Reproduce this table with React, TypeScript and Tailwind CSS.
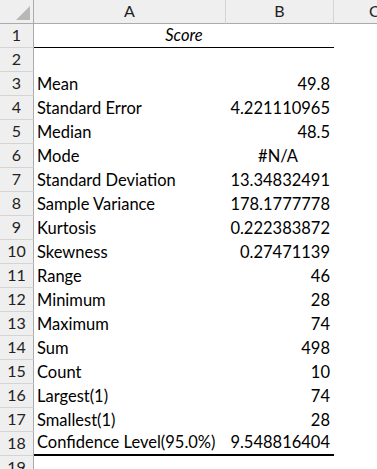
const rows: { label: string; value: string; center?: boolean }[] = [
  { label: 'Mean', value: '49.8' },
  { label: 'Standard Error', value: '4.221110965' },
  { label: 'Median', value: '48.5' },
  { label: 'Mode', value: '#N/A', center: true },
  { label: 'Standard Deviation', value: '13.34832491' },
  { label: 'Sample Variance', value: '178.1777778' },
  { label: 'Kurtosis', value: '0.222383872' },
  { label: 'Skewness', value: '0.27471139' },
  { label: 'Range', value: '46' },
  { label: 'Minimum', value: '28' },
  { label: 'Maximum', value: '74' },
  { label: 'Sum', value: '498' },
  { label: 'Count', value: '10' },
  { label: 'Largest(1)', value: '74' },
  { label: 'Smallest(1)', value: '28' },
  { label: 'Confidence Level(95.0%)', value: '9.548816404' },
];

const font = { fontFamily: 'Lato, "Liberation Sans", sans-serif' };

const RowNum = ({ n }: { n: number }) => (
  <div className="h-[24px] bg-[#efefef] border-r border-b border-r-[#ababab] border-b-[#d4d4d4] flex items-end justify-center pb-[1px] text-[16px] leading-[22px] text-[#222]">
    {n}
  </div>
);

const Sheet = () => {
  return (
    <div className="w-[377px] h-[469px] overflow-hidden bg-white" style={font}>
      <div className="grid grid-cols-[34px_192px_108px_1fr]">
        {/* column headers */}
        <div className="h-[24px] bg-[#efefef] border-r border-b border-[#ababab] flex items-end justify-end p-[3px]">
          <svg width="14" height="14" viewBox="0 0 14 14">
            <polygon points="14,0 14,14 0,14" fill="#b8b8b8" />
          </svg>
        </div>
        <div className="h-[24px] bg-[#efefef] border-r border-b border-r-[#d4d4d4] border-b-[#ababab] flex items-end justify-center pb-[1px] text-[16px] leading-[22px] text-[#222]">A</div>
        <div className="h-[24px] bg-[#efefef] border-r border-b border-r-[#d4d4d4] border-b-[#ababab] flex items-end justify-center pb-[1px] text-[16px] leading-[22px] text-[#222]">B</div>
        <div className="h-[24px] bg-[#efefef] border-b border-b-[#ababab] flex items-end pl-[35px] pb-[1px] text-[16px] leading-[22px] text-[#222]">C</div>

        {/* title */}
        <RowNum n={1} />
        <div className="col-span-2 h-[24px] border-b border-black flex items-end justify-center pb-[1px] text-[16.5px] leading-[22px] italic text-black">Score</div>
        <div />

        <RowNum n={2} />
        <div className="col-span-3" />

        {rows.map((r, i) => {
          const last = i === rows.length - 1;
          return (
            <div key={r.label} className="contents">
              <RowNum n={i + 3} />
              <div className={`h-[24px] flex items-end pl-[3px] pb-[1px] text-[16.5px] leading-[22px] text-black whitespace-nowrap ${last ? 'border-b-2 border-black' : ''}`}>
                {r.label}
              </div>
              <div className={`h-[24px] flex items-end pr-[4px] pb-[1px] text-[16.5px] leading-[22px] text-black ${r.center ? 'justify-center' : 'justify-end'} ${last ? 'border-b-2 border-black' : ''}`}>
                {r.value}
              </div>
              <div />
            </div>
          );
        })}

        <RowNum n={19} />
        <div className="col-span-3" />
      </div>
    </div>
  );
};

export default function App() {
  return <Sheet />;
}
